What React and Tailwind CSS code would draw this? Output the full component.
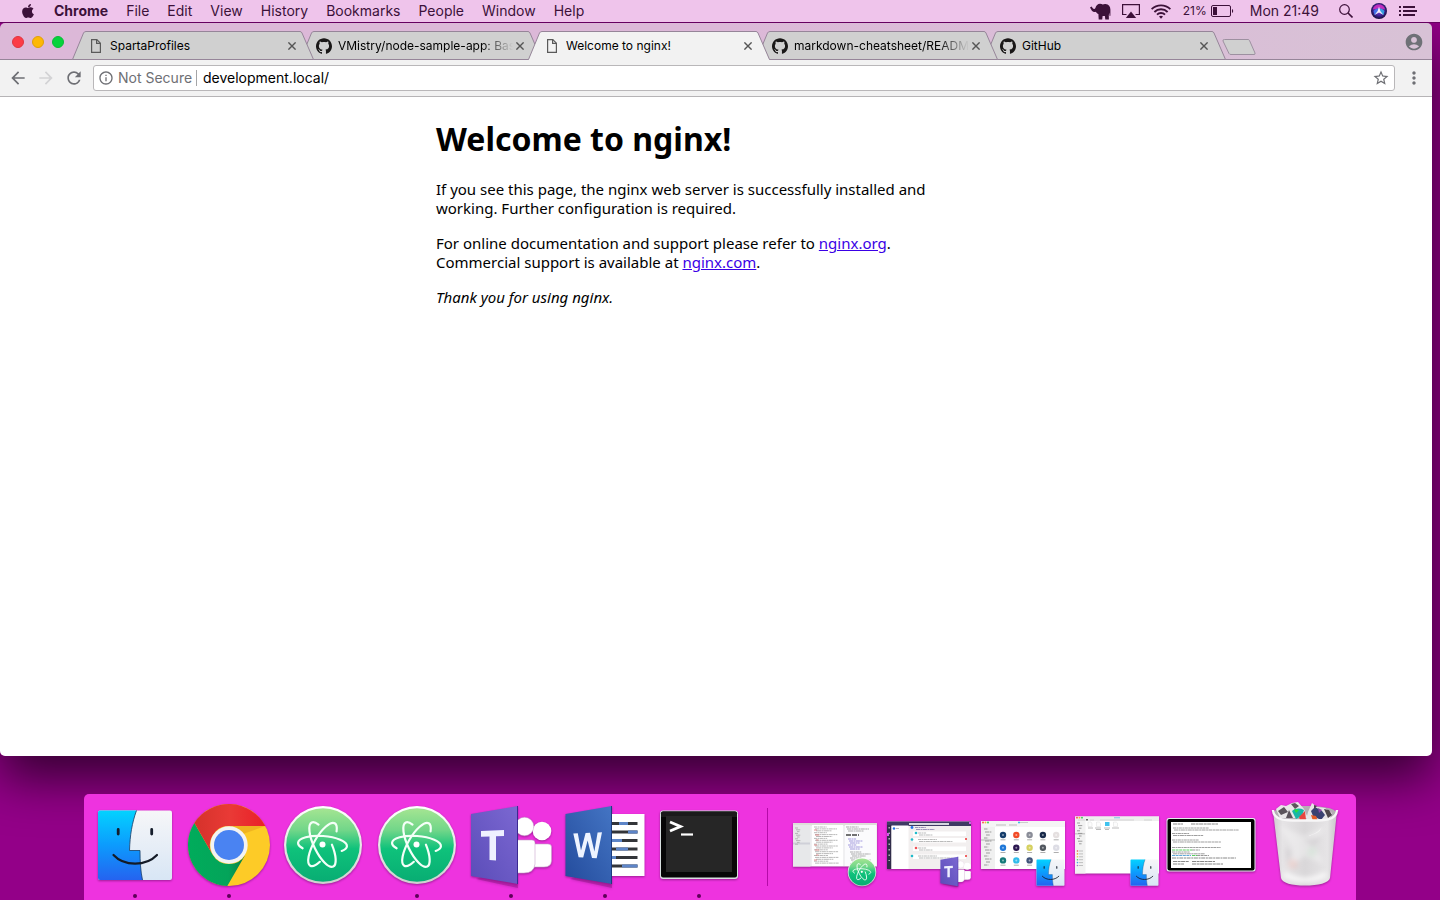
import React from "react";
import { FaApple } from "react-icons/fa";
import { SiGithub } from "react-icons/si";
import {
  MdAccountCircle,
  MdArrowBack,
  MdArrowForward,
  MdInfoOutline,
  MdMoreVert,
  MdRefresh,
  MdStarBorder,
} from "react-icons/md";

/* ---------- Menu bar ---------- */

const MENUS = ["File", "Edit", "View", "History", "Bookmarks", "People", "Window", "Help"];

function ElephantIcon() {
  return (
    <svg width="21" height="17" viewBox="0 0 21 17" fill="currentColor" aria-hidden="true">
      <path d="M0 4.500 1.600 3.600 2.800 5.200C3.600 6.200 4.800 6.200 5.400 5 6 2.400 7.800.7 10 .7c1.200 0 2 .4 2.700 .9C13.500 1.100 14.500.9 15.500 1c3.200.2 4.900 2.500 4.900 5.600v6.100l-.8.3-.3-3.500-.5 2.700.1 4.300h-3.600l-.4-3.400h-2.300l-.4 3.400H8.700l-.3-5.500C7.300 10.500 6.300 9.800 5.900 8.700 4.600 9.300 3 9 1.900 7.700Z" />
    </svg>
  );
}

function AirplayIcon() {
  return (
    <svg width="18" height="15" viewBox="0 0 18 15" aria-hidden="true">
      <path d="M4.500 10.500H.6V.6h16.800v9.900h-3.900" fill="none" stroke="currentColor" strokeWidth="1.200" />
      <path d="M9 7.600 14.200 14H3.800Z" fill="currentColor" />
    </svg>
  );
}

function WifiIcon() {
  return (
    <svg width="20" height="15" viewBox="0 0 20 15" fill="none" stroke="currentColor" strokeWidth="1.800" aria-hidden="true">
      <path d="M.6 5.200a13.300 13.300 0 0 1 18.800 0" />
      <path d="M3.400 8a9.300 9.300 0 0 1 13.200 0" />
      <path d="M6 10.700a5.600 5.600 0 0 1 8 0" />
      <path d="M8 12.600a2.900 2.900 0 0 1 4 0L10 14.700Z" fill="currentColor" stroke="none" />
    </svg>
  );
}

function BatteryIcon() {
  return (
    <svg width="23" height="12" viewBox="0 0 23 12" aria-hidden="true">
      <rect x=".5" y=".5" width="19" height="11" rx="1.500" fill="none" stroke="currentColor" />
      <rect x="2" y="2" width="4" height="8" fill="currentColor" />
      <path d="M21 4c1.600.5 1.600 3.500 0 4Z" fill="currentColor" />
    </svg>
  );
}

function SearchIcon() {
  return (
    <svg width="14" height="14" viewBox="0 0 14 14" fill="none" stroke="currentColor" strokeWidth="1.200" aria-hidden="true">
      <circle cx="5.500" cy="5.500" r="4.800" />
      <path d="m9 9 4.500 4.500" strokeWidth="1.600" />
    </svg>
  );
}

function SiriIcon() {
  return (
    <svg width="16" height="16" viewBox="0 0 16 16" aria-hidden="true">
      <defs>
        <radialGradient id="siri" cx=".5" cy=".45" r=".55">
          <stop offset="0" stopColor="#a04be0" />
          <stop offset=".6" stopColor="#43249c" />
          <stop offset="1" stopColor="#120e35" />
        </radialGradient>
      </defs>
      <circle cx="8" cy="8" r="8" fill="url(#siri)" />
      <path d="M2 6.500C2.500 3 5 1.500 8 1.500s5.500 1.500 6 5L8 5Z" fill="#d42fc0" opacity=".85" />
      <path d="M2.500 8C4 6 6 5.500 8 5.500L6 10 3.500 12Z" fill="#3f7df2" opacity=".85" />
      <path d="M13.500 8C12 6 10 5.500 8 5.500L10 10l2.500 2Z" fill="#2fb0e8" opacity=".85" />
      <path d="M8 3.500 9.300 8 12.500 12 8 9.500 3.500 12 6.700 8Z" fill="#fff" opacity=".9" />
    </svg>
  );
}

function ListIcon() {
  return (
    <svg width="18" height="12" viewBox="0 0 18 12" fill="currentColor" aria-hidden="true">
      <path d="M0 1h2v2H0zM4 1h12v2H4zM0 5h2v2H0zM4 5h14v2H4zM0 9h2v2H0zM4 9h12v2H4z" />
    </svg>
  );
}

function MenuBar() {
  return (
    <header className="relative z-30 flex h-[23px] shrink-0 items-center justify-between border-b border-[#660060] bg-[#efc4eb] pr-[23px] pl-5 text-sm leading-5 text-[#3c1139]">
      <nav className="flex items-center gap-[18px]" aria-label="Application menu">
        <button aria-label="Apple">
          <FaApple size={16} />
        </button>
        <button className="font-bold">Chrome</button>
        {MENUS.map((name) => (
          <button key={name}>{name}</button>
        ))}
      </nav>
      <div className="flex items-center">
        <button className="mr-[11px]" aria-label="Elephant"><ElephantIcon /></button>
        <button className="mr-[11px]" aria-label="AirPlay"><AirplayIcon /></button>
        <button className="mr-3" aria-label="Wi-Fi"><WifiIcon /></button>
        <span className="mr-1 text-xs">21%</span>
        <button className="mr-4" aria-label="Battery"><BatteryIcon /></button>
        <span className="mr-5">Mon 21:49</span>
        <button className="mr-[18px]" aria-label="Search"><SearchIcon /></button>
        <button className="mr-3" aria-label="Siri"><SiriIcon /></button>
        <button aria-label="Notifications"><ListIcon /></button>
      </div>
    </header>
  );
}

/* ---------- Browser ---------- */

const TABS = [
  { title: "SpartaProfiles", icon: "page", layer: "z-10" },
  { title: "VMistry/node-sample-app: Bas", icon: "github", layer: "z-[9]", fade: true },
  { title: "Welcome to nginx!", icon: "page", layer: "z-20", active: true },
  { title: "markdown-cheatsheet/READM", icon: "github", layer: "z-[8]", fade: true },
  { title: "GitHub", icon: "github", layer: "z-[7]" },
];

function PageIcon() {
  return (
    <svg width="16" height="16" viewBox="0 0 16 16" fill="none" stroke="#5a5a5a" strokeWidth="1.200" aria-hidden="true">
      <path d="M3.600 1.600h5.200l3.600 3.600v9.200H3.600Z" />
      <path d="M8.600 1.600v3.800h3.800" />
    </svg>
  );
}

function Tab({ title, icon, layer, active, fade }) {
  return (
    <div className={`relative -mr-[14px] flex h-[29px] w-[242px] min-w-0 items-center pr-[15px] pl-4 ${layer}`} role="tab" aria-selected={!!active}>
      <svg className="absolute inset-0 h-full w-full" viewBox="0 0 242 29" preserveAspectRatio="none" aria-hidden="true">
        <path d="M.5 29 11.500 2Q12.200.5 14 .5H228Q229.300.5 230 2L241.500 29Z" fill={active ? "#f2f2f2" : "#d0d0d0"} />
        <path d="M.5 28.500 11.500 2Q12.200.5 14 .5H228Q229.300.5 230 2L241.500 28.500" fill="none" stroke="#968599" />
        {!active && <path d="M.5 28.500H241.500" stroke="#968599" />}
      </svg>
      <button className="relative flex min-w-0 flex-1 items-center gap-[6px] text-left text-xs text-black">
        {icon === "page" ? <PageIcon /> : <SiGithub className="shrink-0 text-[#191717]" size={16} />}
        <span className={`flex-1 overflow-hidden whitespace-nowrap ${fade ? "[mask-image:linear-gradient(to_right,black_82%,transparent)]" : ""}`}>{title}</span>
      </button>
      <button className="relative flex h-4 w-[14px] items-center justify-center" aria-label={`Close ${title}`}>
        <svg width="8" height="8" viewBox="0 0 8 8" stroke="#555" strokeWidth="1.400" aria-hidden="true">
          <path d="m.4.4 7.200 7.200M7.600.4.400 7.600" />
        </svg>
      </button>
    </div>
  );
}

function TabStrip() {
  return (
    <div className="relative flex h-[37px] items-end bg-linear-to-r from-[#dcb8d8] via-[#dcb8d8] to-[#d8c2d6] pl-3">
      <div className="flex gap-2 self-center">
        <button className="h-3 w-3 rounded-full border border-[#e0343f] bg-[#fc3b47]" aria-label="Close window" />
        <button className="h-3 w-3 rounded-full border border-[#e0a007] bg-[#fdb804]" aria-label="Minimise window" />
        <button className="h-3 w-3 rounded-full border border-[#0abb38] bg-[#06d33c]" aria-label="Zoom window" />
      </div>
      <div className="absolute inset-x-0 bottom-0 h-px bg-[#968599]" />
      <div className="ml-2 flex min-w-0 items-end" role="tablist">
        {TABS.map((tab) => (
          <Tab key={tab.title} {...tab} />
        ))}
      </div>
      <button className="mb-1 ml-[10px]" aria-label="New tab">
        <svg width="34" height="17" viewBox="0 0 34 17" aria-hidden="true">
          <path d="M2.500.5H26Q27 .5 27.500 1.500L33 14Q33.500 15.500 32 15.500H9Q7.500 15.500 7 14.500L1 2Q.5.500 2.500.5Z" fill="#d0d0d0" stroke="#9d90a0" />
        </svg>
      </button>
      <button className="mr-2 ml-auto self-center text-[#6f7177]" aria-label="Profile">
        <MdAccountCircle size={20} />
      </button>
    </div>
  );
}

function Toolbar() {
  return (
    <div className="flex h-[37px] items-center border-b border-[#b6b4b6] bg-[#f2f2f2] pr-2 pl-2 text-[#6e6f74]">
      <div className="flex gap-2">
        <button aria-label="Back"><MdArrowBack size={20} /></button>
        <button className="text-[#d3d3d5]" aria-label="Forward"><MdArrowForward size={20} /></button>
        <button aria-label="Reload"><MdRefresh size={20} /></button>
      </div>
      <div className="mr-[9px] ml-[9px] flex h-[26px] flex-1 items-center rounded-[3px] border border-[#b9b7b9] bg-white pr-1 pl-1 text-sm">
        <MdInfoOutline className="mr-1 shrink-0" size={16} />
        <label htmlFor="address" className="mr-1 w-[74px] shrink-0 whitespace-nowrap">Not Secure</label>
        <span className="mr-[6px] h-4 w-px shrink-0 bg-[#a5a5a7]" />
        <input id="address" className="min-w-0 flex-1 bg-transparent text-black outline-none" defaultValue="development.local/" />
        <button aria-label="Bookmark this page"><MdStarBorder size={18} /></button>
      </div>
      <button aria-label="More options"><MdMoreVert size={20} /></button>
    </div>
  );
}

function Page() {
  return (
    <main className="flex-1 bg-white text-black [font-family:'Noto_Sans',sans-serif]">
      <div className="mx-auto max-w-[560px] pt-[22px] text-[15px] leading-[19px]">
        <h1 className="mb-[22px] text-[32px] leading-[39px] font-bold">Welcome to nginx!</h1>
        <p className="mb-4">
          If you see this page, the nginx web server is successfully installed and
          <br />
          working. Further configuration is required.
        </p>
        <p className="mb-4">
          For online documentation and support please refer to{" "}
          <a href="http://nginx.org/" className="text-[#3a00e6] underline">nginx.org</a>.
          <br />
          Commercial support is available at{" "}
          <a href="http://nginx.com/" className="text-[#3a00e6] underline">nginx.com</a>.
        </p>
        <p><em>Thank you for using nginx.</em></p>
      </div>
    </main>
  );
}

/* ---------- Dock artwork ---------- */

function Gradients() {
  return (
    <svg className="absolute h-0 w-0" aria-hidden="true">
      <defs>
        <linearGradient id="finderBlue" x1="0" y1="0" x2="0" y2="1">
          <stop offset="0" stopColor="#04d2ff" />
          <stop offset=".5" stopColor="#0c9bfd" />
          <stop offset="1" stopColor="#2563f0" />
        </linearGradient>
        <linearGradient id="finderWhite" x1="0" y1="0" x2="0" y2="1">
          <stop offset="0" stopColor="#f6f6f8" />
          <stop offset="1" stopColor="#d8e6f5" />
        </linearGradient>
        <linearGradient id="atomGreen" x1="0" y1="0" x2="0" y2="1">
          <stop offset="0" stopColor="#a5e592" />
          <stop offset=".3" stopColor="#71d689" />
          <stop offset=".55" stopColor="#0fc27b" />
          <stop offset="1" stopColor="#08ad73" />
        </linearGradient>
        <linearGradient id="atomRing" x1="0" y1="0" x2="0" y2="1">
          <stop offset="0" stopColor="#fff" />
          <stop offset="1" stopColor="#cfcfcf" />
        </linearGradient>
        <linearGradient id="teams" x1="0" y1="1" x2="1" y2="0">
          <stop offset="0" stopColor="#5a4cb8" />
          <stop offset="1" stopColor="#7c68d2" />
        </linearGradient>
        <linearGradient id="word" x1="0" y1="1" x2="1" y2="0">
          <stop offset="0" stopColor="#234b9c" />
          <stop offset="1" stopColor="#4475c4" />
        </linearGradient>
        <linearGradient id="chromeRed" x1="0" y1="0" x2="1" y2="0">
          <stop offset="0" stopColor="#d5322b" />
          <stop offset=".5" stopColor="#e93a36" />
          <stop offset="1" stopColor="#ea1f28" />
        </linearGradient>
        <linearGradient id="chromeGreen" x1="0" y1="0" x2="1" y2="0">
          <stop offset="0" stopColor="#00ac5b" />
          <stop offset=".7" stopColor="#04a45a" />
          <stop offset="1" stopColor="#0a7d43" />
        </linearGradient>
        <linearGradient id="bin" x1="0" y1="0" x2="1" y2="0">
          <stop offset="0" stopColor="#cfcccf" />
          <stop offset=".15" stopColor="#e6e4e6" />
          <stop offset=".5" stopColor="#d9d7d9" />
          <stop offset=".85" stopColor="#e6e4e6" />
          <stop offset="1" stopColor="#c9c5c9" />
        </linearGradient>
        <filter id="soft" x="-20%" y="-20%" width="140%" height="140%">
          <feGaussianBlur stdDeviation="2.500" />
        </filter>
      </defs>
    </svg>
  );
}

const ART = "drop-shadow-[0_1px_1px_rgba(60,0,60,0.45)]";

function Finder() {
  return (
    <g>
      <rect x="10" y="16.500" width="74" height="69.500" rx="2" fill="url(#finderWhite)" />
      <path d="M12 16.500H48.500C44 29 42 41 41.500 56.500H52C52 67 52.500 77 54.500 86H12Q10 86 10 84V18.500Q10 16.500 12 16.500Z" fill="url(#finderBlue)" />
      <path d="M48.500 16.500C44 29 42 41 41.500 56.500H52C52 67 52.500 77 54.500 86" fill="none" stroke="#153c66" strokeWidth=".8" />
      <path d="M30.200 35.500v4.500M63.700 35.500v4.500" stroke="#151d2b" strokeWidth="2.800" strokeLinecap="round" />
      <path d="M25.500 61C36 72.500 58 72.500 69 61" fill="none" stroke="#141b26" strokeWidth="2.200" strokeLinecap="round" />
    </g>
  );
}

function Chrome() {
  return (
    <g transform="translate(47 51)">
      <circle r="41" fill="#fdcb27" />
      <path d="M36.300-19H0L14-11Z" fill="#e6a51e" opacity=".6" />
      <path d="M-34.600-22-16.500 9.500A19 19 0 0 0 16.500 9.500L-1.700 41A41 41 0 0 1-34.600-22Z" fill="url(#chromeGreen)" />
      <path d="M-34.600-22A41 41 0 0 1 36.300-19H0A19 19 0 0 0-16.500 9.500Z" fill="url(#chromeRed)" />
      <circle r="18.700" fill="#f3f3f3" />
      <circle r="15" fill="#4a83f2" />
    </g>
  );
}

function Atom() {
  const orbit = { rx: 24.500, ry: 8.500, pathLength: 100 };
  return (
    <g>
      <circle cx="47" cy="51" r="39" fill="url(#atomRing)" />
      <circle cx="47" cy="51" r="36.800" fill="url(#atomGreen)" />
      <g transform="translate(46.500 50.500)" fill="none" stroke="#f4fff8" strokeWidth="2.200" strokeLinecap="round">
        <ellipse {...orbit} transform="rotate(4)" strokeDasharray="64 36" strokeDashoffset="-43" />
        <ellipse {...orbit} transform="rotate(-60)" strokeDasharray="68 32" strokeDashoffset="-40" />
        <ellipse {...orbit} transform="rotate(244)" strokeDasharray="78 22" strokeDashoffset="-29" />
        <circle r="3" fill="#fff" stroke="none" />
      </g>
    </g>
  );
}

function Teams() {
  return (
    <g>
      <path d="M12 85 54 94V89L20 82Z" fill="#7a0b76" opacity=".35" />
      <circle cx="78" cy="37" r="9.300" fill="#fff" />
      <path d="M70 50H84Q87.500 50 87.500 53V67Q87 73 80 73H70Z" fill="#fff" stroke="#c9a6cf" strokeWidth=".6" />
      <circle cx="60.500" cy="32.500" r="9.300" fill="#fff" stroke="#c9a6cf" strokeWidth=".5" />
      <path d="M52 46H68Q71 46 71 49V70Q70 79 60 79H52Z" fill="#fff" stroke="#c9a6cf" strokeWidth=".6" />
      <path d="M7 20 54 12V90L7 82Z" fill="url(#teams)" />
      <path d="M53.500 12V90" stroke="#3c2a91" />
      <path d="M17 37 40 36V42L32 42.300V66.500L25.500 66V42.500L17 42.800Z" fill="#eef0ff" />
    </g>
  );
}

const WORD_LINES = [
  [29.500, 61, 70],
  [38, 70, 79.500],
  [46.500, 54, 64],
  [55, 58, 70],
  [63.500, 54, 58],
  [72, 64, 79.500],
];

function Word() {
  return (
    <g>
      <path d="M12 85 54 94V89L20 82Z" fill="#7a0b76" opacity=".35" />
      <path d="M50 20H86.500V82H50Z" fill="#fff" />
      {WORD_LINES.map(([y, from, to]) => (
        <g key={y} strokeWidth="3">
          <path d={`M54 ${y}H79.500`} stroke="#333539" />
          <path d={`M${from} ${y}H${to}`} stroke="#5d85c8" />
        </g>
      ))}
      <path d="M7.500 20 54 12V90L7.500 82Z" fill="url(#word)" />
      <path d="M53.500 12V90" stroke="#1d3d80" />
      <path d="M15.300 39.500 19.800 39.300 23 56.500 27.600 39 32 38.800 36.400 57.500 39.600 38.400 44 38.200 38.700 64.300 34 64 29.600 46.500 25.200 63.600 20.600 63.200Z" fill="#eef4ff" />
    </g>
  );
}

function Terminal() {
  return (
    <g>
      <rect x="8" y="16.500" width="78" height="68.500" rx="3" fill="#d7e0df" />
      <rect x="9" y="17.500" width="76" height="66" rx="2" fill="#060606" />
      <path d="M9 19.500Q9 17.500 11 17.500H83Q85 17.500 85 19.500V23H9Z" fill="#1a1a1a" />
      <rect x="14" y="22" width="66" height="56" fill="#262626" />
      <path d="m18 28 10.500 4.500L18 37" fill="none" stroke="#fff" strokeWidth="2.800" />
      <path d="M29 40.500H41" stroke="#fff" strokeWidth="2.200" />
    </g>
  );
}

/* A miniature app icon laid over the corner of a minimised window. */
function Badge({ x, y, size, children }) {
  return (
    <svg x={x} y={y} width={size} height={size} viewBox="6 10 82 82">
      {children}
    </svg>
  );
}

/* Rows of tiny dashes standing for text too small to read. */
function Scribble({ x, y, rows, width, gap = 2, color = "#aaa", weight = 1 }) {
  return (
    <g stroke={color} opacity=".8">
      {Array.from({ length: rows }, (_, i) => {
        const length = width * (0.45 + ((i * 37) % 55) / 100);
        const indent = (i * 13) % 3;
        return (
          <path
            key={i}
            d={`M${x + indent} ${y + i * gap}H${x + indent + Math.max(1, length - indent)}`}
            strokeDasharray={`${3 + (i % 3)} .5 2 .4`}
            strokeWidth={weight}
          />
        );
      })}
    </g>
  );
}

function EditorWindow() {
  return (
    <g>
      <rect x="5" y="29" width="84" height="43.500" fill="#f0f0f2" />
      <rect x="5" y="29" width="84" height="2.500" fill="#deded9" />
      <rect x="5" y="31" width="17.500" height="41.500" fill="#e7e8ea" />
      <rect x="5" y="48.500" width="17" height="2" fill="#cfd0d8" />
      <rect x="24" y="31" width="31" height="41" fill="#fff" />
      <rect x="57" y="31" width="31" height="41" fill="#fbfbfd" />
      <Scribble x={7} y={34} rows={10} width={7} gap={1.800} />
      <Scribble x={26} y={33} rows={20} width={28} gap={1.900} color="#a8a8a8" />
      <Scribble x={26} y={36} rows={7} width={7} gap={5} color="#dd7777" />
      <Scribble x={58} y={33} rows={3} width={28} gap={2} color="#999" />
      <path d="M58 41h13" stroke="#444" strokeWidth="1.300" strokeDasharray="5 1" />
      <Scribble x={60} y={45} rows={6} width={18} gap={2} color="#8b80d4" />
      <Scribble x={62} y={58} rows={7} width={25} gap={2} color="#999" />
      <Badge x={59} y={63} size={30}><Atom /></Badge>
    </g>
  );
}

function ChatWindow() {
  return (
    <g>
      <rect x="5" y="27.500" width="84" height="47.500" fill="#f2efef" />
      <rect x="5" y="27.500" width="84" height="4.500" fill="#3f3a63" />
      <rect x="27" y="29" width="40" height="2" fill="#d7d6e0" />
      <rect x="5" y="31" width="4.500" height="44" fill="#302d4a" />
      <rect x="9.500" y="31.500" width="17" height="43.500" fill="#fff" />
      <path d="M7.200 33v34" stroke="#fff" strokeWidth="1.300" strokeDasharray="1.500 4" opacity=".7" />
      <path d="M6 39v3M88 28v2" stroke="#d45be8" strokeWidth="2" />
      <circle cx="12" cy="34.500" r="1.200" fill="#2571e8" />
      <circle cx="30" cy="33.500" r="1.400" fill="#2571e8" />
      <Scribble x={14} y={34.500} rows={1} width={7} />
      <Scribble x={33} y={33.500} rows={2} width={24} color="#887dac" />
      {[39, 45.500, 54, 62].map((y, i) => (
        <g key={y}>
          <rect x="31" y={y - 1.500} width="53" height="4.500" fill="#fff" />
          <circle cx={i % 2 ? 30 : 34} cy={y} r="1.300" fill={i === 2 ? "#ee5357" : "#1fbccb"} />
          <Scribble x={36} y={y} rows={2} width={i % 2 ? 42 : 18} gap={2} />
        </g>
      ))}
      <circle cx="84" cy="45" r="1" fill="#e33" />
      <circle cx="84" cy="62" r="1" fill="#e33" />
      <Badge x={58} y={62} size={31}><Teams /></Badge>
    </g>
  );
}

const APP_COLORS = ["#173e6c", "#f24b26", "#8a8d98", "#182a4a", "#e5e0e0", "#2078d8", "#2b1750", "#d6d160", "#525860", "#dddde5", "#147a79", "#30bbea", "#40547a"];

function WindowLights({ x, y }) {
  return (
    <g>
      <circle cx={x} cy={y} r=".9" fill="#fa4949" />
      <circle cx={x + 2.500} cy={y} r=".9" fill="#f9ba2f" />
      <circle cx={x + 5} cy={y} r=".9" fill="#31c64b" />
    </g>
  );
}

function AppsWindow() {
  return (
    <g>
      <rect x="5" y="27" width="84" height="48" fill="#fff" />
      <rect x="5" y="27" width="84" height="6" fill="#f5f5f5" />
      <rect x="5" y="33" width="14" height="42" fill="#f0f0f0" />
      <WindowLights x={7} y={28.500} />
      <path d="M20 31h10M33 31h8" stroke="#d0d0d0" strokeWidth="1.500" />
      <path d="M42 28.500h2" stroke="#42bce5" strokeWidth="1.300" />
      <path d="M44 28.500h8" stroke="#ccc" />
      <rect x="5" y="45" width="14" height="2" fill="#d2d2d2" />
      <Scribble x={8} y={35} rows={13} width={9} gap={3} color="#888" />
      {APP_COLORS.map((color, i) => {
        const x = 27 + (i % 5) * 13.300;
        const y = 41 + Math.floor(i / 5) * 12.700;
        return (
          <g key={i}>
            <circle cx={x} cy={y} r="3.200" fill={color} />
            <circle cx={x} cy={y} r="1" fill="#fff" opacity=".5" />
            <path d={`M${x - 2.500} ${y + 4.800}h5`} stroke="#999" strokeWidth=".8" />
          </g>
        );
      })}
      <Badge x={59} y={63} size={31}><Finder /></Badge>
    </g>
  );
}

function FilesWindow() {
  return (
    <g>
      <rect x="5" y="22.500" width="84" height="57" fill="#fff" />
      <rect x="5" y="22.500" width="84" height="4.500" fill="#eee" />
      <rect x="5" y="27" width="10.500" height="52.500" fill="#f2f2f2" />
      <WindowLights x={7} y={23.700} />
      <path d="M8 26h7M20 26h4M30 26h34M74 26h8" stroke="#d4d4d4" strokeWidth="1" />
      <path d="M16 25.700h2" stroke="#666" strokeWidth="1.600" />
      <path d="M44 23.800h6" stroke="#78c7e6" />
      <rect x="5" y="39" width="10" height="1.500" fill="#ccc" />
      <Scribble x={7} y={29} rows={9} width={7} gap={2.600} color="#888" />
      {["#e94a4a", "#efa03a", "#e6cf47", "#52c96b", "#47a2e7", "#a274c8"].map((color, i) => (
        <g key={color}>
          <circle cx="7.500" cy={57 + i * 2.900} r=".8" fill={color} />
          <path d={`M9 ${57 + i * 2.900}h4`} stroke="#aaa" strokeWidth=".7" />
        </g>
      ))}
      {[20, 28.500, 45.500].map((x) => (
        <path key={x} d={`M${x - 2} 28h2.800l1.200 1.200v3.300h-4Z`} fill="#fcfcfc" stroke="#ddd" strokeWidth=".5" />
      ))}
      <rect x="35" y="28" width="4.500" height="4" fill="#3fc2ee" />
      <path d="M18 34h5M25 34h6M34 34h6M42 34h7M26 35.500h5M35 35.500h4" stroke="#aaa" strokeWidth=".8" />
      <Badge x={59} y={63} size={31}><Finder /></Badge>
    </g>
  );
}

function ShellWindow() {
  return (
    <g>
      <rect x="2.500" y="24" width="89" height="53.500" rx="2.500" fill="#e4eeee" />
      <rect x="3.500" y="25" width="87" height="51.500" rx="2" fill="#000" />
      <rect x="7" y="28" width="80" height="46" fill="#fff" />
      <path d="M9 30h10M27 30h27" stroke="#888" strokeDasharray="4 .6 3 .5" />
      <Scribble x={9} y={34} rows={2} width={80} color="#888" />
      <Scribble x={8} y={39.500} rows={2} width={38} gap={2} color="#888" />
      <Scribble x={8} y={46} rows={2} width={60} gap={2} color="#888" />
      <Scribble x={8} y={53.500} rows={1} width={108} color="#888" />
      <path d="M8 56h20M28 61.500h5" stroke="#59cf5f" strokeWidth="1" strokeDasharray="3 .6" />
      <path d="M28 56h8M33 61.500h12" stroke="#999" strokeDasharray="3 .6" />
      <path d="M8 61.500h19" stroke="#61a8d8" strokeWidth="1" strokeDasharray="3 .6" />
      <Scribble x={8} y={58} rows={2} width={40} color="#888" gap={1.800} />
      <path d="M8 64h64" stroke="#888" strokeWidth="1" strokeDasharray="4 .7 2 .6" />
      <path d="M9 67.500h16M28 67.500h23M9 70h11M28 70h31" stroke="#888" strokeDasharray="4 .6 3 .5" />
    </g>
  );
}

function Bin() {
  return (
    <g>
      <path d="M16 19C16 14 30 12 47 12S78 14 78 19L74 28H20Z" fill="#b5aeb5" />
      <path d="m18 15 5-4 5 1 6-3 6-1 6 7 4 9H22Z" fill="#e9e7e8" />
      <path d="m20 17 6-4 4 5-7 3Zm13-7 4-1 4 3-4 3ZM28 24l3-8 4 8Z" fill="#5b545b" />
      <path d="M34 17c4-3 8-3 12-1l-2 6-6 3Z" fill="#18b6a7" />
      <path d="m36 15 5 1-3 3Z" fill="#2adf3c" />
      <path d="m41 23 6-6 1 9h-6Z" fill="#e9443f" />
      <path d="m50 18 4-9 5 4 8 1 7 5-3 7H48Z" fill="#e7e4e6" />
      <path d="m53 17 4-4 7 4 3 4-4 5-8-4Z" fill="#3a4171" />
      <path d="m53 21 5 1 2 5h-5Z" fill="#e35c26" />
      <path d="m66 15 5 1 3 5-4 3ZM56 11l3 1-3 3Z" fill="#4f474c" />
      <path d="m60 14 4 2-3 3Z" fill="#8a4ca5" />
      <path d="M15 17C14.500 28 33 27 47 27S79.500 28 79 17L72 84C71 89 60 91.500 47 91.500S24 89 23 84Z" fill="url(#bin)" />
      <path d="M15 16C15.500 28 32 26.500 47 26.500S78.500 28 79 16" fill="none" stroke="#f7f6f7" strokeWidth="2.400" />
      <g filter="url(#soft)">
        <path d="M22 32 46 42 68 32 56 50 66 70 46 62 30 76 34 54Z" fill="#fff" opacity=".35" />
        <path d="m46 46 17-4-8 12ZM28 52l7 8-6 9Z" fill="#b9b4bb" opacity=".35" />
        <circle cx="35" cy="70" r="5" fill="#efa9a0" opacity=".3" />
        <circle cx="54" cy="58" r="5" fill="#afdcb6" opacity=".25" />
        <path d="M26 80Q47 92 68 80" fill="none" stroke="#fff" strokeWidth="5" opacity=".8" />
      </g>
      <path d="M48 42Q58 41 64 33Q61 41 48 42Z" fill="#f4f3f4" />
    </g>
  );
}

const APPS = [
  { name: "Finder", Art: Finder, running: true },
  { name: "Google Chrome", Art: Chrome, running: true },
  { name: "Atom", Art: Atom },
  { name: "Atom Beta", Art: Atom, running: true },
  { name: "Microsoft Teams", Art: Teams, running: true },
  { name: "Microsoft Word", Art: Word, running: true },
  { name: "Terminal", Art: Terminal, running: true },
];

const MINIMISED = [
  { name: "Atom window", Art: EditorWindow },
  { name: "Teams window", Art: ChatWindow },
  { name: "Applications window", Art: AppsWindow },
  { name: "Files window", Art: FilesWindow },
  { name: "Terminal window", Art: ShellWindow },
  { name: "Bin", Art: Bin },
];

function DockItem({ name, Art, running }) {
  return (
    <button className="flex min-w-0 flex-1 flex-col items-center" aria-label={name}>
      <svg className={`w-full ${ART}`} viewBox="0 0 94 100" aria-hidden="true">
        <Art />
      </svg>
      {running && <span className="h-1 w-1 rounded-full bg-[#5e0059]" />}
    </button>
  );
}

function Dock() {
  return (
    <footer className="relative mx-auto flex w-[1272px] max-w-full items-stretch rounded-t-[5px] bg-[#ee33df] px-1 pb-[2px]">
      <Gradients />
      <div className="flex min-w-0 flex-[7]">
        {APPS.map((app) => (
          <DockItem key={app.name} {...app} />
        ))}
      </div>
      <div className="mt-[14px] mr-5 mb-3 ml-[21px] w-px shrink-0 bg-[#b50aa8]" />
      <div className="flex min-w-0 flex-[6]">
        {MINIMISED.map((item) => (
          <DockItem key={item.name} {...item} />
        ))}
      </div>
    </footer>
  );
}

export default function App() {
  return (
    <div className="flex min-h-screen flex-col overflow-hidden bg-[#930088] font-[Inter,sans-serif]">
      <MenuBar />
      <section className="mr-2 mb-[38px] flex flex-1 flex-col overflow-hidden rounded-[5px] shadow-[0_22px_50px_rgba(0,0,0,0.65)]" aria-label="Browser window">
        <TabStrip />
        <Toolbar />
        <Page />
      </section>
      <Dock />
    </div>
  );
}
